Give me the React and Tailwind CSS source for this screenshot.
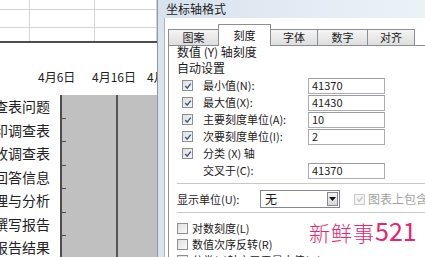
import React from 'react'

const labels = ['设计调查表问题', '打印调查表', '回收调查表', '录入回答信息', '数据处理与分析', '撰写报告', '发布报告结果']

function Check({ checked = true, disabled = false }) {
  return (
    <span
      className={`flex h-[11px] w-[11px] shrink-0 items-center justify-center border ${
        disabled ? 'border-[#cacaca] bg-[#f5f5f5]' : 'border-[#8e8f8f] bg-gradient-to-br from-[#dedede] to-[#fbfbfb]'
      }`}
    >
      {checked ? (
        <svg viewBox="0 0 9 9" className="h-[8px] w-[8px]">
          <path d="M1.4 4.6 L3.6 6.9 L7.6 1.8" fill="none" stroke={disabled ? '#c4c4c4' : '#3f5394'} strokeWidth="1.6" />
        </svg>
      ) : null}
    </span>
  )
}

function Field({ value }) {
  return (
    <div className="flex h-[16px] w-[77px] shrink-0 items-center border border-[#abadb3] border-t-[#9a9ca2] bg-white pl-[3px] text-[11px] text-[#222]">
      {value}
    </div>
  )
}

function Tab({ label, width, active = false }) {
  return (
    <div
      className={
        active
          ? 'z-10 -mb-px -ml-px flex h-[22px] items-center justify-center border border-b-0 border-[#8c8e94] bg-white text-[11px] text-[#111]'
          : '-ml-px flex h-[16px] items-center justify-center border border-b-0 border-[#8c8e94] bg-gradient-to-b from-[#f4f4f4] to-[#dedede] text-[11px] text-[#222]'
      }
      style={{ width }}
    >
      {label}
    </div>
  )
}

export default function App() {
  return (
    <div className="flex h-[257px] w-[425px] overflow-hidden bg-white font-['Noto_Sans_CJK_SC','Noto_Sans',sans-serif]">
      {/* spreadsheet + chart behind the dialog */}
      <div className="flex h-[257px] w-[157px] shrink-0 flex-col overflow-hidden bg-white">
        <div className="grid h-[41px] shrink-0 grid-cols-[30px_65px_1fr] grid-rows-[10px_18px_13px]">
          {Array.from({ length: 9 }).map((_, i) => (
            <div key={i} className={i < 6 ? 'border-b border-r border-[#d4d4d4]' : 'border-r border-[#d4d4d4]'} />
          ))}
        </div>
        <div className="h-[2px] shrink-0 bg-[#4d4d4d]" />
        <div className="mt-[27px] flex h-[14px] shrink-0 items-center whitespace-nowrap pl-[38px] text-[12px] text-[#222]">
          <span className="w-[54px] shrink-0">4月6日</span>
          <span className="w-[55px] shrink-0">4月16日</span>
          <span className="shrink-0">4月26日</span>
        </div>
        <div className="mt-[11px] flex flex-1">
          <div className="flex w-[60px] shrink-0 flex-col">
            {labels.map((t) => (
              <div key={t} className="flex h-[23.5px] shrink-0 items-center justify-end overflow-hidden whitespace-nowrap pr-[10px] text-[14px] text-[#222]">
                <span className="shrink-0">{t}</span>
              </div>
            ))}
          </div>
          <div className="flex flex-1 border-l-2 border-[#4d4d4d] bg-[#c0c0c0]">
            <div className="flex w-[4px] shrink-0 flex-col">
              {labels.map((t) => (
                <div key={t} className="flex h-[23.5px] shrink-0 items-end">
                  <span className="h-px w-[4px] bg-[#4d4d4d]" />
                </div>
              ))}
            </div>
            <div className="w-[50px] shrink-0" />
            <div className="w-[2px] shrink-0 bg-[#555]" />
            <div className="flex-1" />
          </div>
        </div>
      </div>

      {/* dialog */}
      <div className="relative flex h-[257px] flex-1 flex-col border-l border-[#8b98a8] bg-[#dbe4ee]">
        <div className="flex h-[18px] shrink-0 items-center bg-gradient-to-r from-[#d8e2ed] via-[#e4edf5] to-[#eef5f7] pl-[8px] text-[12px] text-[#1c1c1c]">
          坐标轴格式
        </div>
        <div className="flex flex-1">
          <div className="w-[7px] shrink-0 border-r border-[#a9b6c4] bg-[#dbe4ee]" />
          <div className="flex flex-1 flex-col bg-white pl-[3px]">
            <div className="flex h-[28px] shrink-0 items-end border-b border-[#8c8e94] pl-px">
              <Tab label="图案" width={51} />
              <Tab label="刻度" width={53} active />
              <Tab label="字体" width={48} />
              <Tab label="数字" width={51} />
              <Tab label="对齐" width={48} />
            </div>
            <div className="flex flex-1 flex-col border-l border-[#8c8e94] pl-[8px] text-[11px] text-[#1a1a1a]">
              <div className="flex h-[12px] items-center text-[12px]">数值 (Y) 轴刻度</div>
              <div className="flex h-[19px] items-center text-[12px]">自动设置</div>
              {[
                ['最小值(N):', '41370'],
                ['最大值(X):', '41430'],
                ['主要刻度单位(A):', '10'],
                ['次要刻度单位(I):', '2'],
              ].map(([l, v]) => (
                <div key={l} className="flex h-[17px] items-center pl-[5px]">
                  <Check />
                  <span className="ml-[10px] w-[105px] shrink-0">{l}</span>
                  <Field value={v} />
                </div>
              ))}
              <div className="flex h-[17px] items-center pl-[5px]">
                <Check />
                <span className="ml-[10px]">分类 (X) 轴</span>
              </div>
              <div className="flex h-[17px] items-center pl-[26px]">
                <span className="w-[105px] shrink-0">交叉于(C):</span>
                <Field value="41370" />
              </div>
              <div className="mt-[4px] mr-[4px] h-px bg-[#c8c8c8]" />
              <div className="mt-[6px] flex h-[18px] items-center">
                <span className="w-[83px] shrink-0">显示单位(U):</span>
                <div className="flex h-[18px] w-[80px] shrink-0 border border-[#828790] bg-white">
                  <span className="flex flex-1 items-center pl-[4px] text-[12px]">无</span>
                  <span className="m-px flex w-[11px] items-center justify-center border border-[#8a8a8a] bg-gradient-to-b from-[#f4f4f4] to-[#d8d8d8]">
                    <svg viewBox="0 0 7 4" className="h-[4px] w-[7px]">
                      <path d="M0 0 H7 L3.5 4 Z" fill="#111" />
                    </svg>
                  </span>
                </div>
                <span className="ml-[14px]">
                  <Check disabled />
                </span>
                <span className="ml-[3px] whitespace-nowrap text-[12px] text-[#a3a3a3]">图表上包含单位标志</span>
              </div>
              <div className="mt-[4px] mr-[4px] h-px bg-[#c8c8c8]" />
              {['对数刻度(L)', '数值次序反转(R)', '分类(X)轴交叉于最大值(M)'].map((l, i) => (
                <div key={l} className={i === 0 ? 'mt-[7px] flex h-[16px] items-center' : 'flex h-[16px] items-center'}>
                  <Check checked={false} />
                  <span className="ml-[4px] whitespace-nowrap">{l}</span>
                </div>
              ))}
            </div>
          </div>
        </div>
        <div className="absolute left-[151px] top-[212px] flex items-baseline whitespace-nowrap text-[#e8246a]">
          <span className="text-[21px] font-light tracking-[1px]">新鲜事</span>
          <span className="text-[25px]">521</span>
        </div>
      </div>
    </div>
  )
}
